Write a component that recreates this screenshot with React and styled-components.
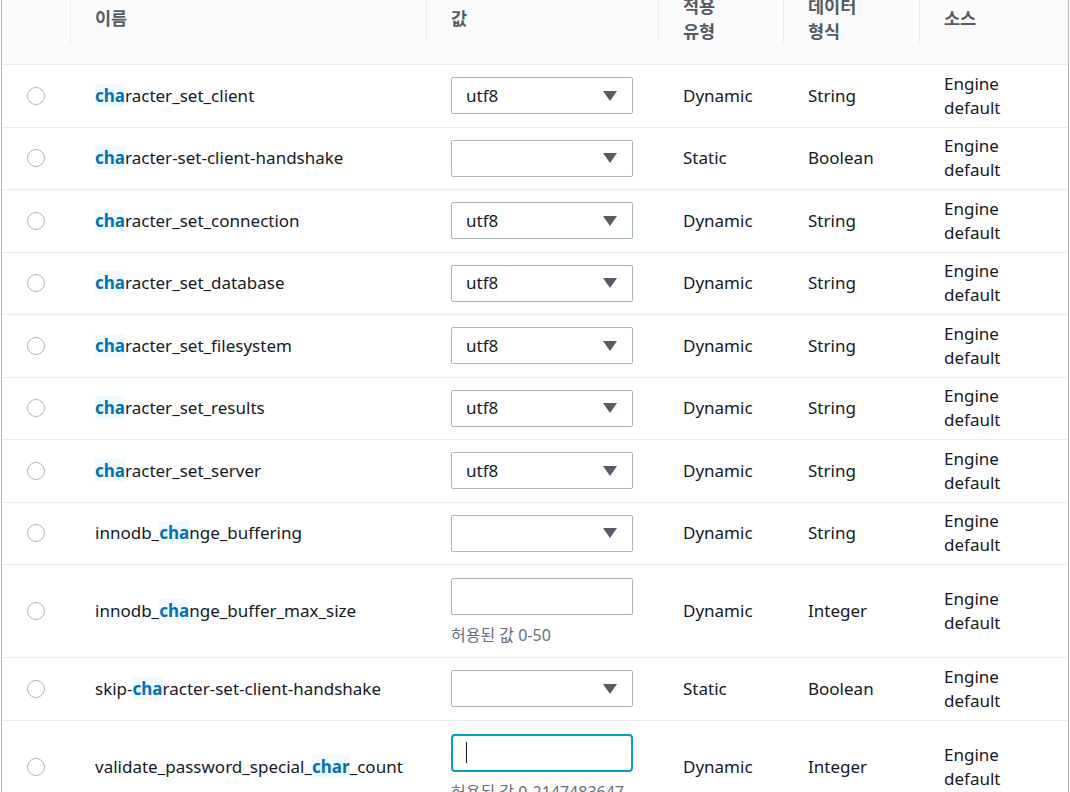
import React from 'react';
import styled, { createGlobalStyle, css } from 'styled-components';

// Reseteo global
const GlobalStyle = createGlobalStyle`
  * {
    margin: 0;
    padding: 0;
    box-sizing: border-box;
  }
  body, html {
    overflow: hidden;
    width: 100vw;
    height: 100vh;
    background: #ffffff;
    font-family: 'Noto Sans', 'Noto Sans CJK KR', sans-serif;
    color: #16191f;
  }
`;

const COLUMNS = '68px 356px 232px 125px 136px 1fr';

// Contenedor de la tabla
const TableWrap = styled.div`
  width: 1068px;
  margin-left: 1px;
  border-left: 1px solid #aab7b8;
  border-right: 1px solid #aab7b8;
  min-height: 100vh;
`;

// Cabecera (desplazada: la parte superior queda fuera de la vista)
const HeaderRow = styled.div`
  display: grid;
  grid-template-columns: ${COLUMNS};
  grid-template-rows: 64px;
  background: #fafafa;
  border-bottom: 1px solid #eaeded;
`;

const HeaderCell = styled.div`
  position: relative;
  display: flex;
  align-items: center;
  height: 64px;
  padding: 0 0 27px 25px;
  font-size: 17.5px;
  line-height: 25px;
  font-weight: 700;
  color: #545b64;

  ${(p) =>
    p.$divider &&
    css`
      &::before {
        content: '';
        position: absolute;
        left: 0;
        top: 0;
        height: 43px;
        width: 1px;
        background: #eaeded;
      }
    `}
`;

const Row = styled.div`
  display: grid;
  grid-template-columns: ${COLUMNS};
  align-items: center;
  border-bottom: 1px solid #eaeded;
`;

const Cell = styled.div`
  padding: 6.75px 0 6.75px 25px;
  font-size: 17px;
  line-height: 24px;
`;

const ValueCell = styled(Cell)`
  padding: ${(p) => (p.$tall ? '13px 0 12px 25px' : '12.25px 0 12.25px 25px')};
`;

const RadioCell = styled.div`
  display: flex;
  justify-content: center;
  align-items: center;
`;

const Radio = styled.span`
  width: 18px;
  height: 18px;
  border-radius: 50%;
  border: 1.5px solid #aab7b8;
  background: #fff;
`;

const Name = styled.span`
  white-space: nowrap;
`;

const Mark = styled.mark`
  background: #f1faff;
  color: #0073bb;
  font-weight: 700;
`;

const Select = styled.div`
  display: flex;
  align-items: center;
  justify-content: space-between;
  width: 182px;
  height: 37px;
  padding: 0 15px 0 14px;
  border: 1px solid #aab7b8;
  border-radius: 2px;
  background: #fff;
  font-size: 17px;
`;

const Caret = styled.svg`
  width: 14px;
  height: 10px;
  fill: #545b64;
`;

const TextBox = styled.div`
  display: flex;
  align-items: center;
  width: 182px;
  height: ${(p) => (p.$focused ? '38px' : '37px')};
  padding-left: ${(p) => (p.$focused ? '13px' : '14px')};
  border: ${(p) => (p.$focused ? '2px solid #00a1c9' : '1px solid #aab7b8')};
  border-radius: ${(p) => (p.$focused ? '4px' : '2px')};
  background: #fff;
`;

const TextCursor = styled.span`
  width: 1px;
  height: 21px;
  background: #16191f;
`;

const Help = styled.div`
  margin-top: 10px;
  font-size: 16px;
  line-height: 20px;
  color: #687078;
  white-space: nowrap;
`;

const params = [
  { pre: '', hl: 'cha', post: 'racter_set_client', value: 'utf8', type: 'Dynamic', data: 'String' },
  { pre: '', hl: 'cha', post: 'racter-set-client-handshake', value: '', type: 'Static', data: 'Boolean' },
  { pre: '', hl: 'cha', post: 'racter_set_connection', value: 'utf8', type: 'Dynamic', data: 'String' },
  { pre: '', hl: 'cha', post: 'racter_set_database', value: 'utf8', type: 'Dynamic', data: 'String' },
  { pre: '', hl: 'cha', post: 'racter_set_filesystem', value: 'utf8', type: 'Dynamic', data: 'String' },
  { pre: '', hl: 'cha', post: 'racter_set_results', value: 'utf8', type: 'Dynamic', data: 'String' },
  { pre: '', hl: 'cha', post: 'racter_set_server', value: 'utf8', type: 'Dynamic', data: 'String' },
  { pre: 'innodb_', hl: 'cha', post: 'nge_buffering', value: '', type: 'Dynamic', data: 'String' },
  { pre: 'innodb_', hl: 'cha', post: 'nge_buffer_max_size', input: true, help: '허용된 값 0-50', type: 'Dynamic', data: 'Integer' },
  { pre: 'skip-', hl: 'cha', post: 'racter-set-client-handshake', value: '', type: 'Static', data: 'Boolean' },
  { pre: 'validate_password_special_', hl: 'char', post: '_count', input: true, focused: true, help: '허용된 값 0-2147483647', type: 'Dynamic', data: 'Integer' },
];

function ValueField({ p }) {
  if (p.input) {
    return (
      <>
        <TextBox $focused={p.focused}>{p.focused && <TextCursor />}</TextBox>
        <Help>{p.help}</Help>
      </>
    );
  }
  return (
    <Select>
      <span>{p.value}</span>
      <Caret viewBox="0 0 14 10">
        <path d="M0 0 H14 L7 10 Z" />
      </Caret>
    </Select>
  );
}

export default function App() {
  return (
    <>
      <GlobalStyle />
      <TableWrap>
        <HeaderRow>
          <HeaderCell />
          <HeaderCell $divider>이름</HeaderCell>
          <HeaderCell $divider>값</HeaderCell>
          <HeaderCell $divider>적용<br />유형</HeaderCell>
          <HeaderCell $divider>데이터<br />형식</HeaderCell>
          <HeaderCell $divider>소스</HeaderCell>
        </HeaderRow>
        {params.map((p, i) => (
          <Row key={i}>
            <RadioCell>
              <Radio />
            </RadioCell>
            <Cell>
              <Name>
                {p.pre}
                <Mark>{p.hl}</Mark>
                {p.post}
              </Name>
            </Cell>
            <ValueCell $tall={p.input}>
              <ValueField p={p} />
            </ValueCell>
            <Cell>{p.type}</Cell>
            <Cell>{p.data}</Cell>
            <Cell>
              Engine
              <br />
              default
            </Cell>
          </Row>
        ))}
      </TableWrap>
    </>
  );
}
